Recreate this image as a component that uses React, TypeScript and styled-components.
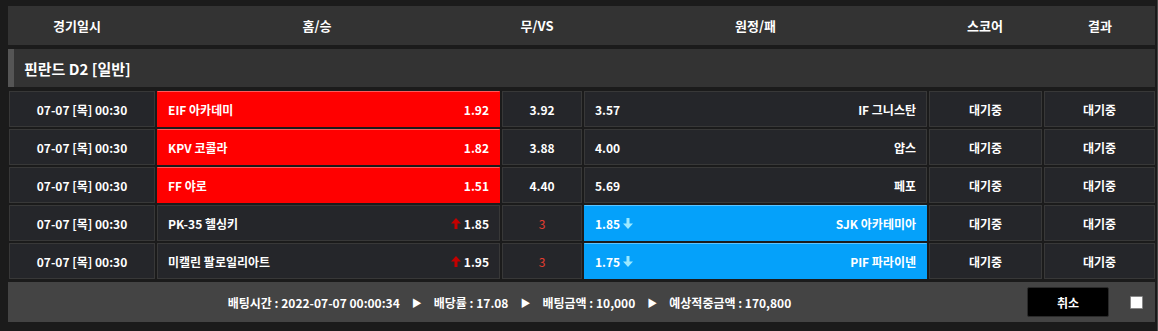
import React from 'react';
import styled, { createGlobalStyle } from 'styled-components';

const GlobalStyle = createGlobalStyle`
  body {
    margin: 0;
    background: #1b1b1b;
    font-family: "Noto Sans CJK KR", "Noto Sans", sans-serif;
    color: #fff;
  }
`;

const Page = styled.div`
  width: 1147px;
  padding: 6px 2px 9px 8px;
  border-right: 1px solid #474747;
`;

const HeaderRow = styled.div`
  display: grid;
  grid-template-columns: 138px 342px 98px 339px 120px 1fr;
  height: 39px;
  background: #333;
  align-items: center;
`;

const HeaderCell = styled.div`
  text-align: center;
  font-size: 13px;
  font-weight: 700;
`;

const LeagueRow = styled.div`
  margin-top: 4px;
  height: 38px;
  background: #333;
  border-left: 6px solid #555;
  padding-left: 10px;
  display: flex;
  align-items: center;
  font-size: 15px;
  font-weight: 700;
`;

const Rows = styled.div`
  margin-top: 4px;
  padding-left: 1px;
  display: grid;
  grid-template-columns: 146px 343px 80px 343px 113px 1fr;
  grid-auto-rows: 36px;
  gap: 2px;
`;

type Tone = 'plain' | 'red' | 'blue';

const toneBg: Record<Tone, string> = { plain: '#25262a', red: '#ff0000', blue: '#05a1fa' };
const toneBorder: Record<Tone, string> = { plain: '#383838', red: '#ff0000', blue: '#05a1fa' };
const toneTop: Record<Tone, string> = { plain: '#383838', red: '#ff5a5a', blue: '#5cc4ff' };

const Cell = styled.div<{ $tone?: Tone; $align?: 'center' | 'between' }>`
  display: flex;
  align-items: center;
  justify-content: ${(p) => (p.$align === 'between' ? 'space-between' : 'center')};
  padding: 0 10px;
  font-size: 12px;
  font-weight: 700;
  background: ${(p) => toneBg[p.$tone || 'plain']};
  border: 1px solid ${(p) => toneBorder[p.$tone || 'plain']};
  border-top-color: ${(p) => toneTop[p.$tone || 'plain']};
  box-sizing: border-box;
  white-space: nowrap;
`;

const Odds = styled.span`
  display: inline-flex;
  align-items: center;
  gap: 3px;
`;

const DrawScore = styled.span`
  color: #e53d30;
  font-weight: 400;
`;

const Footer = styled.div`
  margin-top: 3px;
  height: 40px;
  background: #444;
  display: flex;
  align-items: center;
  font-size: 12px;
  font-weight: 700;
`;

const Summary = styled.div`
  flex: 1;
  display: flex;
  justify-content: center;
  align-items: center;
  gap: 12px;
  padding-right: 16px;
`;

const Play = styled.span`
  font-size: 10px;
  color: #fff;
`;

const CancelButton = styled.button`
  width: 82px;
  height: 30px;
  background: #000;
  border: 1px solid #2a2a2a;
  border-radius: 2px;
  color: #fff;
  font-family: inherit;
  font-size: 12px;
  font-weight: 700;
`;

const Check = styled.span`
  width: 11px;
  height: 11px;
  margin: 0 12px 0 21px;
  background: #fff;
  border: 1px solid #888;
  border-radius: 1px;
`;

const UpArrow = () => (
  <svg width="10" height="11" viewBox="0 0 10 11">
    <path d="M5 0 L10 5.5 L6.5 5.5 L6.5 11 L3.5 11 L3.5 5.5 L0 5.5 Z" fill="#c40000" />
  </svg>
);

const DownArrow = () => (
  <svg width="10" height="11" viewBox="0 0 10 11">
    <path d="M5 11 L10 5.5 L6.5 5.5 L6.5 0 L3.5 0 L3.5 5.5 L0 5.5 Z" fill="#9ce9ff" />
  </svg>
);

type Game = {
  home: string;
  homeOdds: string;
  homeUp?: boolean;
  draw: string;
  away: string;
  awayOdds: string;
  awayDown?: boolean;
  pick: 'home' | 'away';
  drawIsScore?: boolean;
};

const games: Game[] = [
  { home: 'EIF 아카데미', homeOdds: '1.92', draw: '3.92', away: 'IF 그니스탄', awayOdds: '3.57', pick: 'home' },
  { home: 'KPV 코콜라', homeOdds: '1.82', draw: '3.88', away: '얍스', awayOdds: '4.00', pick: 'home' },
  { home: 'FF 야로', homeOdds: '1.51', draw: '4.40', away: '페포', awayOdds: '5.69', pick: 'home' },
  { home: 'PK-35 헬싱키', homeOdds: '1.85', homeUp: true, draw: '3', drawIsScore: true, away: 'SJK 아카테미아', awayOdds: '1.85', awayDown: true, pick: 'away' },
  { home: '미캘린 팔로일리아트', homeOdds: '1.95', homeUp: true, draw: '3', drawIsScore: true, away: 'PIF 파라이넨', awayOdds: '1.75', awayDown: true, pick: 'away' },
];

const headers = ['경기일시', '홈/승', '무/VS', '원정/패', '스코어', '결과'];

export default function App() {
  return (
    <>
      <GlobalStyle />
      <Page>
        <HeaderRow>
          {headers.map((h) => (
            <HeaderCell key={h}>{h}</HeaderCell>
          ))}
        </HeaderRow>
        <LeagueRow>핀란드 D2 [일반]</LeagueRow>
        <Rows>
          {games.map((g, i) => (
            <React.Fragment key={i}>
              <Cell>07-07 [목] 00:30</Cell>
              <Cell $align="between" $tone={g.pick === 'home' ? 'red' : 'plain'}>
                <span>{g.home}</span>
                <Odds>
                  {g.homeUp && <UpArrow />}
                  {g.homeOdds}
                </Odds>
              </Cell>
              <Cell>{g.drawIsScore ? <DrawScore>{g.draw}</DrawScore> : g.draw}</Cell>
              <Cell $align="between" $tone={g.pick === 'away' ? 'blue' : 'plain'}>
                <Odds>
                  {g.awayOdds}
                  {g.awayDown && <DownArrow />}
                </Odds>
                <span>{g.away}</span>
              </Cell>
              <Cell>대기중</Cell>
              <Cell>대기중</Cell>
            </React.Fragment>
          ))}
        </Rows>
        <Footer>
          <Summary>
            <span>배팅시간 : 2022-07-07 00:00:34</span>
            <Play>▶</Play>
            <span>배당률 : 17.08</span>
            <Play>▶</Play>
            <span>배팅금액 : 10,000</span>
            <Play>▶</Play>
            <span>예상적중금액 : 170,800</span>
          </Summary>
          <CancelButton>취소</CancelButton>
          <Check />
        </Footer>
      </Page>
    </>
  );
}
